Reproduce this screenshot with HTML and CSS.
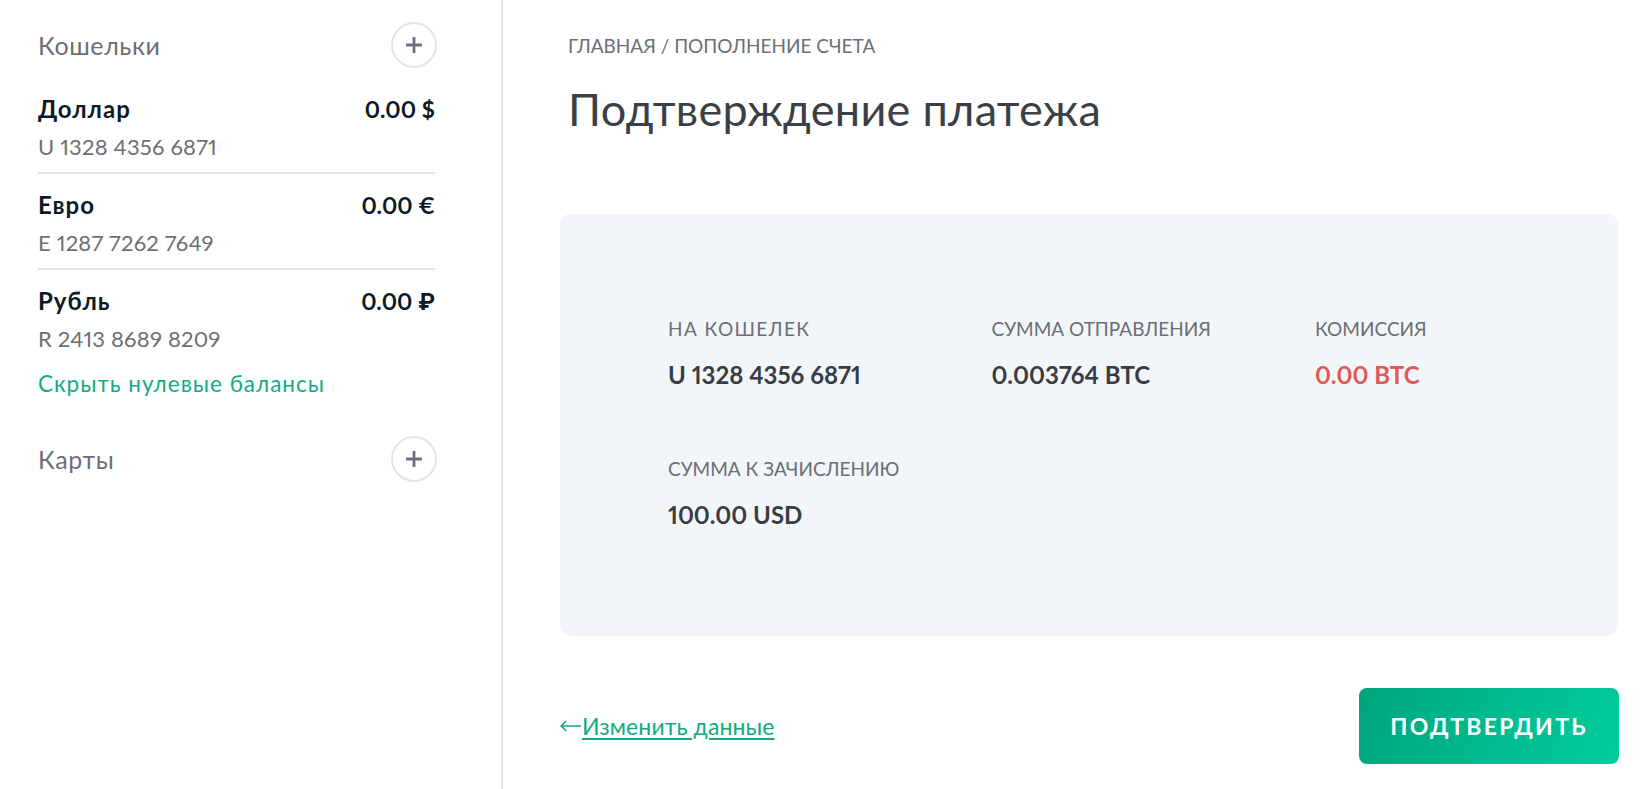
FILE: index.html
```html
<!DOCTYPE html>
<html lang="ru">
<head>
<meta charset="utf-8">
<title>Подтверждение платежа</title>
<link rel="stylesheet" href="styles.css">
</head>
<body>
<div class="layout">
  <aside class="sidebar">
    <div class="section-head">
      <span class="section-title">Кошельки</span>
      <button class="add-btn" type="button" aria-label="Добавить кошелек">
        <svg width="16" height="16" viewBox="0 0 16 16"><rect x="6.6" y="0" width="2.8" height="16" rx="0.5"/><rect x="0" y="6.6" width="16" height="2.8" rx="0.5"/></svg>
      </button>
    </div>
    <ul class="wallets">
      <li class="wallet">
        <div class="wallet-top"><span class="wallet-name">Доллар</span><span class="wallet-amount">0.00 $</span></div>
        <div class="wallet-num">U 1328 4356 6871</div>
      </li>
      <li class="wallet">
        <div class="wallet-top"><span class="wallet-name">Евро</span><span class="wallet-amount">0.00 €</span></div>
        <div class="wallet-num">E 1287 7262 7649</div>
      </li>
      <li class="wallet">
        <div class="wallet-top"><span class="wallet-name">Рубль</span><span class="wallet-amount">0.00 ₽</span></div>
        <div class="wallet-num">R 2413 8689 8209</div>
      </li>
    </ul>
    <a class="hide-zero" href="#">Скрыть нулевые балансы</a>
    <div class="section-head cards-head">
      <span class="section-title">Карты</span>
      <button class="add-btn" type="button" aria-label="Добавить карту">
        <svg width="16" height="16" viewBox="0 0 16 16"><rect x="6.6" y="0" width="2.8" height="16" rx="0.5"/><rect x="0" y="6.6" width="16" height="2.8" rx="0.5"/></svg>
      </button>
    </div>
  </aside>
  <main class="main">
    <div class="breadcrumb">ГЛАВНАЯ / ПОПОЛНЕНИЕ СЧЕТА</div>
    <h1 class="title">Подтверждение платежа</h1>
    <section class="card">
      <div class="details">
        <div class="detail">
          <div class="detail-label wide">НА КОШЕЛЕК</div>
          <div class="detail-value">U 1328 4356 6871</div>
        </div>
        <div class="detail">
          <div class="detail-label">СУММА ОТПРАВЛЕНИЯ</div>
          <div class="detail-value">0.003764 BTC</div>
        </div>
        <div class="detail">
          <div class="detail-label">КОМИССИЯ</div>
          <div class="detail-value fee">0.00 BTC</div>
        </div>
        <div class="detail">
          <div class="detail-label">СУММА К ЗАЧИСЛЕНИЮ</div>
          <div class="detail-value">100.00 USD</div>
        </div>
      </div>
    </section>
    <div class="actions">
      <a class="back-link" href="#">
        <svg class="back-arrow" width="21" height="12" viewBox="0 0 21 12"><path d="M21 6H1.2M6.2 1L1.2 6l5 5" fill="none" stroke="currentColor" stroke-width="1.5"/></svg><span class="back-text">Изменить данные</span>
      </a>
      <button class="confirm" type="button">ПОДТВЕРДИТЬ</button>
    </div>
  </main>
</div>
</body>
</html>
```
FILE: styles.css
```css
* {
  box-sizing: border-box;
}

html, body {
  margin: 0;
  padding: 0;
  height: 100%;
  background: #ffffff;
}

body {
  font-family: "Lato", "Inter", "Noto Sans", sans-serif;
  color: #3b3f46;
  overflow: hidden;
  font-variant-numeric: proportional-nums;
}

.layout {
  display: flex;
  height: 789px;
}

/* Sidebar */
.sidebar {
  width: 503px;
  flex: none;
  border-right: 2px solid #e4e8ec;
  padding: 22px 66px 0 38px;
}

.section-head {
  display: flex;
  align-items: center;
  justify-content: space-between;
  height: 46px;
}

.section-title {
  font-size: 25px;
  line-height: 46px;
  letter-spacing: 0.6px;
  color: #6d6f76;
}

.add-btn {
  width: 46px;
  height: 46px;
  margin-right: -2px;
  border-radius: 50%;
  border: 2px solid #dfe5ea;
  background: #ffffff;
  padding: 0;
  display: flex;
  align-items: center;
  justify-content: center;
  fill: #6b7080;
}

.wallets {
  list-style: none;
  margin: 10px 0 0;
  padding: 0;
}

.wallet {
  padding: 17px 0 11px;
  border-bottom: 2px solid #dde3e8;
}

.wallet:last-child {
  border-bottom: none;
}

.wallet-top {
  display: flex;
  justify-content: space-between;
  align-items: baseline;
  line-height: 28px;
  font-weight: 700;
  color: #0c1a28;
}

.wallet-name {
  font-size: 24px;
  letter-spacing: 1px;
}

.wallet-amount {
  font-size: 23px;
}

.wallet-num {
  margin-top: 10px;
  font-size: 22px;
  line-height: 28px;
  letter-spacing: 0.2px;
  color: #6d6f76;
}

.hide-zero {
  display: block;
  margin-top: 7px;
  font-size: 22.5px;
  line-height: 26px;
  letter-spacing: 1px;
  color: #13ab84;
  text-decoration: none;
}

.cards-head {
  margin-top: 39px;
}

/* Main */
.main {
  flex: 1;
  min-width: 0;
  padding: 34px 32px 0 57px;
  display: flex;
  flex-direction: column;
}

.breadcrumb {
  margin-left: 8px;
  font-size: 19px;
  line-height: 24px;
  color: #6d6f76;
}

.title {
  margin: 25px 0 0 8px;
  font-size: 45px;
  line-height: 52px;
  letter-spacing: 0.3px;
  font-weight: 400;
  color: #3b3f46;
}

.card {
  margin-top: 79px;
  background: #f2f6f9;
  border-radius: 10px;
  padding: 103px 0 106px 108px;
}

.details {
  display: grid;
  grid-template-columns: 323.5px 323.5px 1fr;
  row-gap: 67px;
}

.detail-label {
  font-size: 19px;
  line-height: 24px;
  color: #6b6e75;
}

.detail-label.wide {
  letter-spacing: 1.4px;
}

.detail-value {
  margin-top: 19px;
  font-size: 24px;
  line-height: 30px;
  font-weight: 700;
  color: #383c44;
}

.detail-value.fee {
  color: #e05858;
}

.actions {
  margin-top: 52px;
  display: flex;
  justify-content: space-between;
  align-items: center;
}

.back-link {
  display: flex;
  align-items: center;
  color: #13ab84;
  text-decoration: none;
  font-size: 23px;
  line-height: 28px;
  letter-spacing: 0.1px;
}

.back-arrow {
  flex: none;
  margin-right: 1px;
}

.back-text {
  text-decoration: underline;
  text-decoration-thickness: 2px;
  text-underline-offset: 3px;
}

.confirm {
  width: 260px;
  height: 76px;
  margin-right: -1px;
  border: none;
  border-radius: 8px;
  background: linear-gradient(110deg, #00a57d 0%, #00bb8d 50%, #00cc9c 100%);
  color: #ffffff;
  font-family: inherit;
  font-size: 23px;
  font-weight: 700;
  letter-spacing: 2.3px;
  padding: 0;
}
```
